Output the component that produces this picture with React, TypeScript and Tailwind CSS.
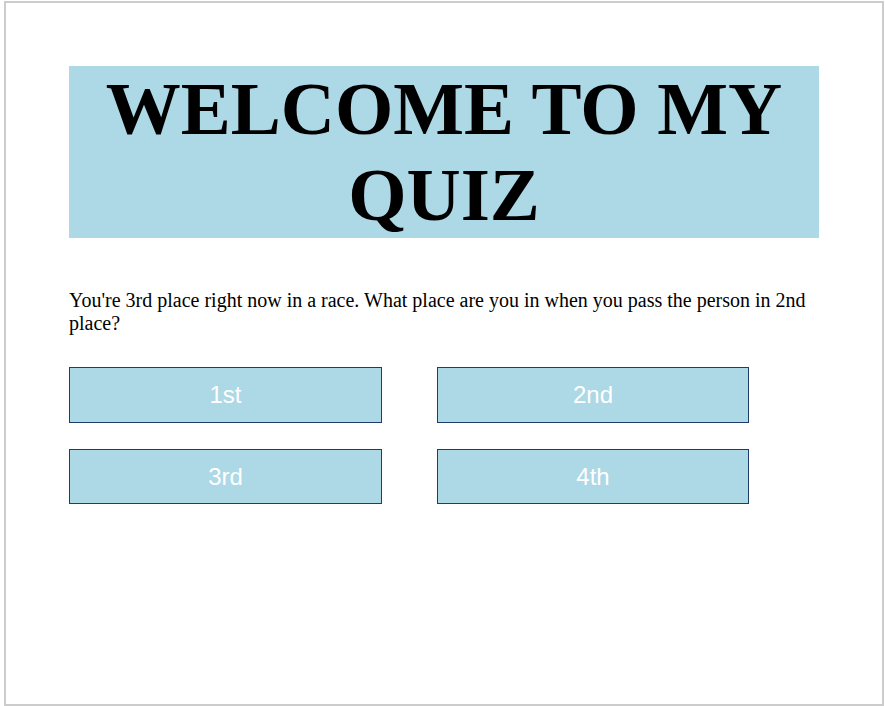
export default function App() {
  const answers = ["1st", "2nd", "3rd", "4th"];
  return (
    <div className="ml-[4px] mt-[1px] h-[705px] w-[880px] border-2 border-[#cccccc] bg-white">
      <div className="ml-[63px] w-[750px] pt-[63px]">
        <h1 className="bg-[#add8e6] text-center font-['Liberation_Serif',serif] text-[75px] font-bold leading-[86px] text-black">
          WELCOME TO MY QUIZ
        </h1>
        <p className="mt-[51px] font-['Liberation_Serif',serif] text-[20px] leading-[23px] text-black">
          You're 3rd place right now in a race. What place are you in when you pass the person in 2nd place?
        </p>
        <div className="mt-[32px] grid grid-cols-[313px_312px] gap-x-[55px] gap-y-[26px]">
          {answers.map((a) => (
            <button
              key={a}
              className="flex h-[55.5px] items-center justify-center border border-[#1f3c6b] bg-[#add8e6] pt-[1px] font-['Liberation_Sans',Arial,sans-serif] text-[24px] text-white"
            >
              {a}
            </button>
          ))}
        </div>
      </div>
    </div>
  );
}
